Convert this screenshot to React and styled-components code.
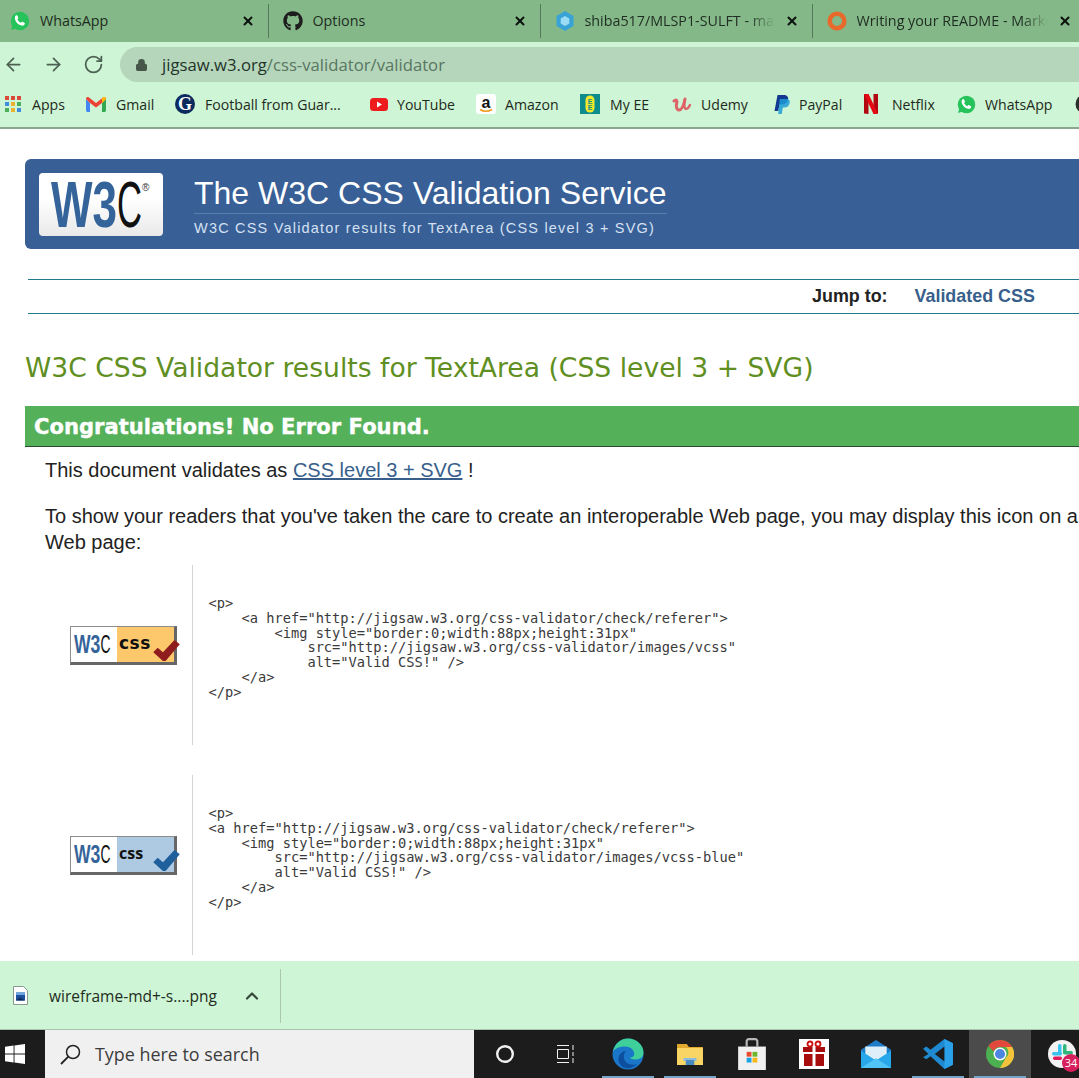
import React from 'react';
import styled, { createGlobalStyle } from 'styled-components';
import { ArrowLeft, ArrowRight, RotateCw, Lock, X, ChevronUp } from 'lucide-react';
import { FaGithub } from 'react-icons/fa';

const Global = createGlobalStyle`
  html, body { margin: 0; padding: 0; overflow: hidden; background: #fff; }
  #root { width: 1079px; height: 1078px; overflow: hidden; }
  * { box-sizing: border-box; }
`;

const Shell = styled.div`
  width: 1079px; height: 1078px; display: flex; flex-direction: column; overflow: hidden;
  font-family: "Open Sans", "Noto Sans", sans-serif;
`;

/* ---------- tabs ---------- */
const TabStrip = styled.div`
  height: 42px; flex: none; background: #84b888; display: flex; align-items: center;
`;
const Tab = styled.div`
  flex: none; width: ${p => (p.$first ? 269 : 272)}px; height: 34px;
  padding: 0 13px 0 ${p => (p.$first ? 10 : 14)}px; display: flex; align-items: center;
  border-right: ${p => (p.$last ? 'none' : '1px solid #55785a')};
`;
const TabIcon = styled.span`
  width: 20px; height: 20px; flex: none; display: flex; align-items: center; justify-content: center;
  color: #1d1d1d;
`;
const TabTitle = styled.span`
  flex: 1; min-width: 0; margin: 0 10px 2px ${p => (p.$first ? 10 : 9.5)}px; font-size: 14.3px; color: #1f2c21; white-space: nowrap; overflow: hidden;
  ${p => p.$fade && `-webkit-mask-image: linear-gradient(to right, #000 86%, transparent 100%); mask-image: linear-gradient(to right, #000 86%, transparent 100%);`}
`;
const TabClose = styled(X)`
  flex: none; width: 14px; height: 14px; color: #0c120d; stroke-width: 3.4;
`;

/* ---------- toolbar ---------- */
const Toolbar = styled.div`
  height: 41px; flex: none; background: #cef5d5; display: flex; align-items: flex-end; padding: 0 0 1px 3px;
`;
const NavGroup = styled.div`
  display: flex; align-items: center; height: 35px; gap: 19px; width: 117px;
`;
const NavButton = styled.span`
  width: 21px; height: 21px; display: flex; color: #4d6152;
  svg { width: 21px; height: 21px; stroke-width: 2; }
`;
const Address = styled.div`
  flex: 1; height: 35px; background: #b5d6bb; border-radius: 18px 0 0 18px;
  display: flex; align-items: center; padding-left: 15px; gap: 14px; font-size: 16.7px;
`;
const LockIcon = styled(Lock)`
  width: 13px; height: 14px; color: #46574a; fill: #46574a; stroke-width: 2.2;
`;
const UrlHost = styled.span` color: #24332a; `;
const UrlPath = styled.span` color: #5a7561; `;

/* ---------- bookmarks ---------- */
const Bookmarks = styled.div`
  height: 46px; flex: none; background: #cef5d5; border-bottom: 2px solid #8ba78f; padding: 0 0 2px 5px;
  display: flex; align-items: center; white-space: nowrap; overflow: hidden;
`;
const Bookmark = styled.div`
  flex: none; display: flex; align-items: center; width: ${p => p.$w}px; font-size: 14.1px; color: #1e2a20;
`;
const BookmarkIcon = styled.span`
  width: 20px; height: 20px; flex: none; margin-right: ${p => p.$gap}px; display: flex; align-items: center;
  justify-content: ${p => (p.$start ? 'flex-start' : 'center')};
`;

/* ---------- page ---------- */
const Page = styled.main`
  flex: 1; min-height: 0; overflow: hidden; background: #fff; padding-top: 30px; color: #222;
  font-family: "Liberation Sans", Arial, sans-serif;
`;
const Banner = styled.header`
  margin-left: 25px; height: 90px; width: 1100px; background: #385f96; border-radius: 6px;
  padding-left: 14px; display: flex; align-items: center; gap: 31px;
`;
const LogoPlate = styled.div`
  width: 124px; height: 63px; border-radius: 4px; background: linear-gradient(#ffffff 40%, #e9e9e9);
  display: flex; align-items: center; justify-content: center;
`;
const BannerText = styled.div` display: flex; flex-direction: column; width: 473px; padding-top: 4px; `;
const BannerTitle = styled.h1`
  margin: 0; padding-bottom: 2px; font-weight: 400; font-size: 32px; line-height: 36px; color: #fff; white-space: nowrap;
  border-bottom: 1px solid #5c7eaf;
`;
const BannerSub = styled.div`
  margin-top: 6px; font-size: 14.5px; line-height: 17px; letter-spacing: 1.2px; color: #d5e1f2; white-space: nowrap;
`;
const JumpBar = styled.nav`
  margin: 30px 0 0 28px; height: 35px; width: 1100px; border-top: 1px solid #1f7a8c; border-bottom: 1px solid #1f7a8c;
  display: flex; align-items: center; padding-left: 784px; gap: 27px; font-size: 17.9px; font-weight: 700; white-space: nowrap;
`;
const JumpLabel = styled.span` color: #222; `;
const JumpLink = styled.span` color: #385f8c; `;
const ResultsHeading = styled.h2`
  margin: 36px 0 0 25px; font-family: "DejaVu Sans", Verdana, sans-serif; font-weight: 400; font-size: 26.6px; line-height: 36px;
  color: #5f8f22; white-space: nowrap;
`;
const Congrats = styled.h3`
  margin: 20px 0 0 25px; width: 1100px; height: 41px; background: #55b05a; border-bottom: 1px solid #2c4a2e;
  padding-left: 9px; display: flex; align-items: center;
  font-family: "DejaVu Sans", Verdana, sans-serif; font-weight: 700; font-size: 21.1px; color: #fff; white-space: nowrap;
  -webkit-text-stroke: 0.4px #fff;
`;
const Para = styled.p`
  margin: ${p => p.$top}px 0 0 45px; font-size: 20px; line-height: 26px; color: #222; white-space: nowrap;
`;
const DocLink = styled.span` color: #385f8c; text-decoration: underline; `;
const BadgeRow = styled.section`
  margin: ${p => p.$top}px 0 0 25px; height: 180px; display: flex;
`;
const BadgeCell = styled.div`
  width: 168px; flex: none; display: flex; align-items: center; padding: 0 0 20px 45px; border-right: 1px solid #d4d4d4;
`;
const CodeCell = styled.pre`
  margin: 0; padding: 31px 0 0 15.5px; font-family: "DejaVu Sans Mono", "Liberation Mono", monospace; font-size: 13.7px; line-height: 14.75px; color: #3a3a3a;
`;
const Badge = styled.div`
  width: 107px; height: 39px; flex: none; display: flex; border: 1px solid #8c8c8c; border-right: 3px solid #666; border-bottom: 3px solid #666;
  position: relative; background: ${p => p.$bg};
`;
const BadgeLogo = styled.div`
  width: 46px; flex: none; background: #fff; display: flex; align-items: center; justify-content: center;
`;
const BadgeCss = styled.span`
  margin: ${p => p.$top}px 0 0 2px; font-size: ${p => p.$size}px; line-height: 15px; font-weight: 700; color: #111; letter-spacing: ${p => p.$ls}px;
  font-family: ${p => p.$font};
`;
const BadgeCheck = styled.svg`
  position: absolute; right: -6px; bottom: 0; width: 27px; height: 23px;
`;

/* ---------- download bar ---------- */
const DownloadBar = styled.div`
  height: 69px; flex: none; background: #cef5d5; display: flex; align-items: center; padding: 1px 0 0 13px;
  border-bottom: 1px solid #a8c4ad;
`;
const FileName = styled.span`
  margin-left: 21px; width: 193px; font-size: 15.5px; color: #1f2c21; white-space: nowrap;
`;
const Chevron = styled(ChevronUp)`
  width: 20px; height: 20px; color: #33463a; stroke-width: 2.6; margin-right: 18px;
`;
const DownloadSep = styled.span` width: 1px; height: 54px; background: #a9c6af; `;

/* ---------- taskbar ---------- */
const Taskbar = styled.footer`
  height: 48px; flex: none; background: #1c1c1c; display: flex; align-items: stretch;
`;
const StartButton = styled.div`
  width: 45px; flex: none; display: flex; align-items: center; padding-left: 5px;
`;
const SearchBox = styled.div`
  width: 429px; flex: none; background: #f0f0f0; display: flex; align-items: center; padding-left: 15px; gap: 14px;
  font-size: 17.9px; color: #3c3c3c;
`;
const TaskItem = styled.div`
  width: ${p => p.$w || 62}px; flex: none; display: flex; align-items: center; justify-content: center; position: relative;
  background: ${p => (p.$active ? '#4b4b4b' : 'transparent')};
  ${p => p.$open && `&::after { content: ''; position: absolute; left: 5px; right: 5px; bottom: 0; height: 2px; background: #76a5c9; }`}
`;
const TaskBadge = styled.span`
  position: absolute; left: 31px; top: 24px; width: 18px; height: 18px; border-radius: 50%; background: #d61f5c; color: #fff;
  font-size: 11px; line-height: 18px; text-align: center; font-family: "Open Sans", sans-serif;
`;

const WhatsIcon = ({ size }) => (
  <svg width={size} height={size} viewBox="0 0 20 20">
    <circle cx="10" cy="10" r="9.2" fill="#25c35a" />
    <path d="M1 19l1.600-5 3.400 3.400z" fill="#25c35a" />
    <path d="M5.800 4.600c.6-.6 1.500-.5 1.800.3l.7 1.800c.1.400 0 .7-.5 1.200l-.3.500c.7 1.500 1.900 2.700 3.400 3.400l.7-.9c.3-.3.6-.3 1-.2l1.800 1c.5.200.6.600.5 1.100-.4 1.300-1.600 2-3 1.800-3.600-.7-6.400-3.600-7-6.900-.1-1.200.2-2.400.9-3.100z" fill="#fff" />
  </svg>
);

const W3CMark = ({ width, height, full }) => (
  <svg width={width} height={height} viewBox="0 0 100 48">
    <text x="0" y="47" fontFamily="Liberation Sans, sans-serif" fontWeight="700" fontSize="64" textLength="66" lengthAdjust="spacingAndGlyphs" fill="#34649a">W3</text>
    <text x="66" y="47" fontFamily="Liberation Sans, sans-serif" fontSize="64" textLength="25" lengthAdjust="spacingAndGlyphs" fill="#111">C</text>
    {full && <text x="91" y="11" fontFamily="Liberation Sans, sans-serif" fontSize="10" fill="#333">®</text>}
  </svg>
);

const Check = ({ color }) => (
  <BadgeCheck viewBox="0 0 30 26">
    <path d="M0 15l5-5 6 5L24 1l6 5-16 19h-3z" fill={color} />
  </BadgeCheck>
);

const AppsIcon = () => (
  <svg width="16" height="16" viewBox="0 0 16 16">
    {[['#d9483b', '#d9483b', '#d9483b'], ['#3f8dd8', '#ecb22e', '#4aae5b'], ['#4aae5b', '#ecb22e', '#3f8dd8']].flatMap((row, y) =>
      row.map((c, x) => <rect key={`${x}${y}`} x={x * 6} y={y * 6} width="4" height="4" fill={c} />)
    )}
  </svg>
);
const GmailIcon = () => (
  <svg width="20" height="15" viewBox="0 0 20 15">
    <path d="M0 2v11c0 1 .6 2 1.500 2H4V6z" fill="#4285f4" />
    <path d="M16 6v9h2.500c1 0 1.500-1 1.500-2V2z" fill="#34a853" />
    <path d="M0 2c0-2 2-2.500 3-1.500L10 6l7-5.500c1-1 3-.5 3 1.500l-4 4-6 4.500L4 6z" fill="#ea4335" />
    <path d="M16 .9l1-.4c1-1 3-.5 3 1.500l-4 4z" fill="#fbbc05" />
  </svg>
);
const GuardianIcon = () => (
  <svg width="20" height="20" viewBox="0 0 20 20">
    <circle cx="10" cy="10" r="10" fill="#0b2a5e" />
    <text x="10" y="16" textAnchor="middle" fontFamily="Liberation Serif, serif" fontWeight="700" fontSize="18" fill="#fff">G</text>
  </svg>
);
const YouTubeIcon = () => (
  <svg width="18" height="13" viewBox="0 0 18 13">
    <rect width="18" height="13" rx="3.500" fill="#ee1c1c" />
    <path d="M7 3.500l5 3-5 3z" fill="#fff" />
  </svg>
);
const AmazonIcon = () => (
  <svg width="20" height="20" viewBox="0 0 20 20">
    <rect width="20" height="20" rx="3" fill="#fff" />
    <text x="10" y="13.500" textAnchor="middle" fontFamily="Liberation Sans, sans-serif" fontWeight="700" fontSize="16" fill="#111">a</text>
    <path d="M4 15.500c3.500 2.200 8 2.200 12 0" fill="none" stroke="#f29a1f" strokeWidth="1.500" />
  </svg>
);
const EEIcon = () => (
  <svg width="20" height="20" viewBox="0 0 20 20">
    <rect width="20" height="20" fill="#0e8c8c" />
    <rect x="5.500" y="1.500" width="9" height="17" rx="4.500" fill="#f3e92b" />
    <text x="10" y="9.500" textAnchor="middle" fontFamily="Liberation Sans, sans-serif" fontWeight="700" fontSize="7" fill="#0e8c8c">E</text>
    <text x="10" y="16" textAnchor="middle" fontFamily="Liberation Sans, sans-serif" fontWeight="700" fontSize="7" fill="#0e8c8c">E</text>
  </svg>
);
const UdemyIcon = () => (
  <svg width="20" height="18" viewBox="0 0 20 18" fill="none" stroke="#df6468" strokeWidth="3" strokeLinecap="round" strokeLinejoin="round">
    <path d="M2 6c2-2 3-1 3 1-1 3-1 8 2 8 3 0 5-6 6-11" />
    <path d="M13 5c-1 4-1 9 1 9 1.500 0 3-2 4-4" strokeWidth="2.400" />
  </svg>
);
const PayPalIcon = () => (
  <svg width="16" height="19" viewBox="0 0 16 19">
    <path d="M3.500 0h6c3.500 0 5 2 4.500 4.500-.6 3.300-3 5-6 5H5.500L4.300 16H.5z" fill="#12398f" />
    <path d="M5.800 4h6.500c2.800 0 3.900 1.800 3.400 4-.6 3-2.800 4.500-5.500 4.500H8.800L7.800 19H4.200z" fill="#1f9bd8" opacity="0.85" />
  </svg>
);
const NetflixIcon = () => (
  <svg width="14" height="20" viewBox="0 0 14 20">
    <path d="M0 0h4.500v20L0 19.500z" fill="#b20710" />
    <path d="M9.500 0H14v19.500L9.500 20z" fill="#b20710" />
    <path d="M0 0h4.500l9.500 19.500L9.500 20z" fill="#e50914" />
  </svg>
);
const DarkDiscIcon = () => (
  <svg width="20" height="20" viewBox="0 0 20 20"><circle cx="10" cy="10" r="9.500" fill="#2b2f2c" /></svg>
);

const EdgeIcon = () => (
  <svg width="32" height="32" viewBox="0 0 32 32">
    <circle cx="16" cy="16" r="15.500" fill="#1a76c9" />
    <path d="M1 14C3 5 9 .5 16 .5c9 0 15.500 7 15.500 14 0 5-4 7-8 7-3 0-5-1-5.500-2 3 0 5-2 4-5-1-4-5-6-9-6C8 8.500 3 10 1 14z" fill="#3ecf9a" />
    <path d="M14 30c-6-1-9-7-7-12 1-3 4-5 7-5-3 3-3 9 1 12 3 2 7 2 10 1-3 3-7 5-11 4z" fill="#0d4f9e" />
  </svg>
);
const FolderIcon = () => (
  <svg width="28" height="26" viewBox="0 0 26 26" preserveAspectRatio="none">
    <path d="M1 3h9l2 3h13v18H1z" fill="#e2a92f" />
    <path d="M1 7h24v17H1z" fill="#f9d565" />
    <path d="M9 18h8v6H9z" fill="#4a8cc0" />
    <path d="M7 20v-3h12v3h-2v-1H9v1z" fill="#8cbde0" />
  </svg>
);
const StoreIcon = () => (
  <svg width="28" height="32" viewBox="0 0 26 30">
    <path d="M8 8V3c0-1 1-2 2-2h6c1 0 2 1 2 2v5" fill="none" stroke="#b9b9b9" strokeWidth="2" />
    <path d="M0 8h26v22H0z" fill="#f1f1f1" />
    <rect x="8" y="13" width="4.500" height="4.500" fill="#e94b2f" />
    <rect x="13.500" y="13" width="4.500" height="4.500" fill="#6cb52d" />
    <rect x="8" y="18.500" width="4.500" height="4.500" fill="#1ca3e3" />
    <rect x="13.500" y="18.500" width="4.500" height="4.500" fill="#f7b718" />
  </svg>
);
const GiftIcon = () => (
  <svg width="30" height="30" viewBox="0 0 30 30">
    <rect width="30" height="30" fill="#fff" />
    <rect x="4" y="8" width="22" height="5" fill="#a80d0d" />
    <rect x="5" y="15" width="20" height="12" fill="#a80d0d" />
    <rect x="13.500" y="8" width="3" height="19" fill="#fff" />
    <circle cx="11" cy="5" r="2.500" fill="none" stroke="#c11" strokeWidth="1.800" />
    <circle cx="19" cy="5" r="2.500" fill="none" stroke="#c11" strokeWidth="1.800" />
  </svg>
);
const MailIcon = () => (
  <svg width="30" height="30" viewBox="0 0 28 28">
    <path d="M0 10L14 1l14 9v17H0z" fill="#1f7dc8" />
    <path d="M4 7h20v8l-10 6-10-6z" fill="#dfeff9" />
    <path d="M0 11l14 9 14-9v16H0z" fill="#28a8ea" />
    <path d="M0 27l14-9 14 9z" fill="#50c4f5" />
  </svg>
);
const VSCodeIcon = () => (
  <svg width="30" height="32" viewBox="0 0 28 30">
    <path d="M20 1l8 4v20l-8 4L7 17l-4 3-3-2 5-3-5-5 3-2 4 3z" fill="#1f8ad2" />
    <path d="M20 1l8 4v20l-8 4z" fill="#2aa1e8" />
    <path d="M20 8v14l-9-7z" fill="#1c1c1c" />
  </svg>
);
const ChromeIcon = () => (
  <svg width="28" height="28" viewBox="0 0 26 26">
    <circle cx="13" cy="13" r="13" fill="#4caf50" />
    <path d="M13 0a13 13 0 0 1 11.300 6.500H13a6.500 6.500 0 0 0-6 4L2.300 5.500A13 13 0 0 1 13 0z" fill="#e2483b" />
    <path d="M24.300 6.500A13 13 0 0 1 13 26l5.500-9.500a6.500 6.500 0 0 0 0-10z" fill="#f5c33b" />
    <circle cx="13" cy="13" r="6" fill="#fff" />
    <circle cx="13" cy="13" r="4.700" fill="#4d86e0" />
  </svg>
);
const SlackIcon = () => (
  <svg width="28" height="28" viewBox="0 0 28 28">
    <circle cx="14" cy="14" r="14" fill="#f3f3f3" />
    <rect x="10" y="4" width="3.500" height="10" rx="1.700" fill="#36c5f0" />
    <rect x="4" y="12" width="10" height="3.500" rx="1.700" fill="#36c5f0" />
    <rect x="15" y="4" width="3.500" height="10" rx="1.700" fill="#2eb67d" />
    <rect x="15" y="11" width="10" height="3.500" rx="1.700" fill="#2eb67d" />
    <rect x="5" y="16.500" width="9" height="3.500" rx="1.700" fill="#e01e5a" />
  </svg>
);
const WindowsIcon = () => (
  <svg width="20" height="20" viewBox="0 0 20 20">
    <path d="M0 2.800L8.600 1.600V9.500H0zM9.500 1.500L20 0v9.500H9.500zM0 10.500h8.600v7.900L0 17.200zM9.500 10.500H20V20L9.500 18.500z" fill="#fff" />
  </svg>
);
const SearchGlyph = () => (
  <svg width="21" height="21" viewBox="0 0 21 21" fill="none" stroke="#222" strokeWidth="1.500">
    <circle cx="13" cy="8" r="6.500" />
    <path d="M8.300 12.700L1 20" strokeWidth="1.800" />
  </svg>
);
const TaskViewIcon = () => (
  <svg width="20" height="20" viewBox="0 0 20 20" fill="none" stroke="#f0f0f0" strokeWidth="1">
    <path d="M1 1.500h12M1 18.500h12M1.500 5.500h11v9h-11zM17 1v5M17 8v4M17 14v5" />
  </svg>
);
const CortanaIcon = () => (
  <svg width="20" height="20" viewBox="0 0 20 20">
    <circle cx="10" cy="10" r="7.800" fill="none" stroke="#f2f2f2" strokeWidth="2.400" />
  </svg>
);
const FileIcon = () => (
  <svg width="15" height="19" viewBox="0 0 15 19">
    <path d="M.5.500h10l4 4v14H.5z" fill="#fdfdfd" stroke="#8a9a90" />
    <rect x="3" y="6.500" width="9" height="8" fill="#1b4f9c" />
    <path d="M3 14.500l4-3 5 3z" fill="#0d2c5c" />
    <rect x="3" y="6.500" width="9" height="2.500" fill="#6ba6e0" />
  </svg>
);

const code1 = `<p>
    <a href="http://jigsaw.w3.org/css-validator/check/referer">
        <img style="border:0;width:88px;height:31px"
            src="http://jigsaw.w3.org/css-validator/images/vcss"
            alt="Valid CSS!" />
    </a>
</p>`;
const code2 = `<p>
<a href="http://jigsaw.w3.org/css-validator/check/referer">
    <img style="border:0;width:88px;height:31px"
        src="http://jigsaw.w3.org/css-validator/images/vcss-blue"
        alt="Valid CSS!" />
    </a>
</p>`;

const tabs = [
  { title: 'WhatsApp', icon: <WhatsIcon size={20} />, first: true },
  { title: 'Options', icon: <FaGithub size={20} /> },
  { title: 'shiba517/MLSP1-SULFT - main', fade: true, icon: (
    <svg width="20" height="20" viewBox="0 0 20 20"><path d="M10 0l8.500 5v10L10 20l-8.500-5V5z" fill="#3aa3d6" /><path d="M10 5l4.300 2.500v5L10 15l-4.300-2.500v-5z" fill="#9adcf5" /></svg>
  ) },
  { title: 'Writing your README - Markdown', fade: true, last: true, icon: (
    <svg width="20" height="20" viewBox="0 0 20 20"><circle cx="10" cy="10" r="7.300" fill="none" stroke="#e8692c" strokeWidth="4.600" /></svg>
  ) },
];

const bookmarks = [
  { label: 'Apps', w: 81, gap: 7, start: true, icon: <AppsIcon /> },
  { label: 'Gmail', w: 89, gap: 10, icon: <GmailIcon /> },
  { label: 'Football from Guar...', w: 194, gap: 10, icon: <GuardianIcon /> },
  { label: 'YouTube', w: 107, gap: 8, icon: <YouTubeIcon /> },
  { label: 'Amazon', w: 104, gap: 9, icon: <AmazonIcon /> },
  { label: 'My EE', w: 92, gap: 10, icon: <EEIcon /> },
  { label: 'Udemy', w: 100, gap: 9, icon: <UdemyIcon /> },
  { label: 'PayPal', w: 92, gap: 7, icon: <PayPalIcon /> },
  { label: 'Netflix', w: 92, gap: 8, start: true, icon: <NetflixIcon /> },
  { label: 'WhatsApp', w: 119, gap: 9, icon: <WhatsIcon size={19} /> },
  { label: '', w: 20, gap: 0, icon: <DarkDiscIcon /> },
];

export default function App() {
  return (
    <Shell>
      <Global />
      <TabStrip>
        {tabs.map(t => (
          <Tab key={t.title} $first={t.first} $last={t.last}>
            <TabIcon>{t.icon}</TabIcon>
            <TabTitle $fade={t.fade} $first={t.first}>{t.title}</TabTitle>
            <TabClose />
          </Tab>
        ))}
      </TabStrip>
      <Toolbar>
        <NavGroup>
          <NavButton><ArrowLeft /></NavButton>
          <NavButton><ArrowRight /></NavButton>
          <NavButton><RotateCw /></NavButton>
        </NavGroup>
        <Address>
          <LockIcon />
          <span><UrlHost>jigsaw.w3.org</UrlHost><UrlPath>/css-validator/validator</UrlPath></span>
        </Address>
      </Toolbar>
      <Bookmarks>
        {bookmarks.map((b, i) => (
          <Bookmark key={i} $w={b.w}>
            <BookmarkIcon $gap={b.gap} $start={b.start}>{b.icon}</BookmarkIcon>
            {b.label}
          </Bookmark>
        ))}
      </Bookmarks>
      <Page>
        <Banner>
          <LogoPlate><W3CMark width={100} height={48} full /></LogoPlate>
          <BannerText>
            <BannerTitle>The W3C CSS Validation Service</BannerTitle>
            <BannerSub>W3C CSS Validator results for TextArea (CSS level 3 + SVG)</BannerSub>
          </BannerText>
        </Banner>
        <JumpBar>
          <JumpLabel>Jump to:</JumpLabel>
          <JumpLink>Validated CSS</JumpLink>
        </JumpBar>
        <ResultsHeading>W3C CSS Validator results for TextArea (CSS level 3 + SVG)</ResultsHeading>
        <Congrats>Congratulations! No Error Found.</Congrats>
        <Para $top={10}>This document validates as <DocLink>CSS level 3 + SVG</DocLink> !</Para>
        <Para $top={20}>
          To show your readers that you've taken the care to create an interoperable Web page, you may display this icon on any
          <br />Web page:
        </Para>
        <BadgeRow $top={10}>
          <BadgeCell>
            <Badge $bg="#fdc86b">
              <BadgeLogo><W3CMark width={40} height={20} /></BadgeLogo>
              <BadgeCss $top={9} $size={17} $ls={0.5} $font={'"DejaVu Sans", sans-serif'}>css</BadgeCss>
              <Check color="#8f1d1d" />
            </Badge>
          </BadgeCell>
          <CodeCell>{code1}</CodeCell>
        </BadgeRow>
        <BadgeRow $top={30}>
          <BadgeCell>
            <Badge $bg="#aec9e2">
              <BadgeLogo><W3CMark width={40} height={20} /></BadgeLogo>
              <BadgeCss $top={9} $size={16} $ls={0} $font={'"Open Sans", sans-serif'}>css</BadgeCss>
              <Check color="#1f5f9c" />
            </Badge>
          </BadgeCell>
          <CodeCell>{code2}</CodeCell>
        </BadgeRow>
      </Page>
      <DownloadBar>
        <FileIcon />
        <FileName>wireframe-md+-s....png</FileName>
        <Chevron />
        <DownloadSep />
      </DownloadBar>
      <Taskbar>
        <StartButton><WindowsIcon /></StartButton>
        <SearchBox><SearchGlyph />Type here to search</SearchBox>
        <TaskItem $w={61}><CortanaIcon /></TaskItem>
        <TaskItem $w={62}><TaskViewIcon /></TaskItem>
        <TaskItem $open><EdgeIcon /></TaskItem>
        <TaskItem $open><FolderIcon /></TaskItem>
        <TaskItem><StoreIcon /></TaskItem>
        <TaskItem><GiftIcon /></TaskItem>
        <TaskItem><MailIcon /></TaskItem>
        <TaskItem $open><VSCodeIcon /></TaskItem>
        <TaskItem $active $open><ChromeIcon /></TaskItem>
        <TaskItem><SlackIcon /><TaskBadge>34</TaskBadge></TaskItem>
      </Taskbar>
    </Shell>
  );
}
